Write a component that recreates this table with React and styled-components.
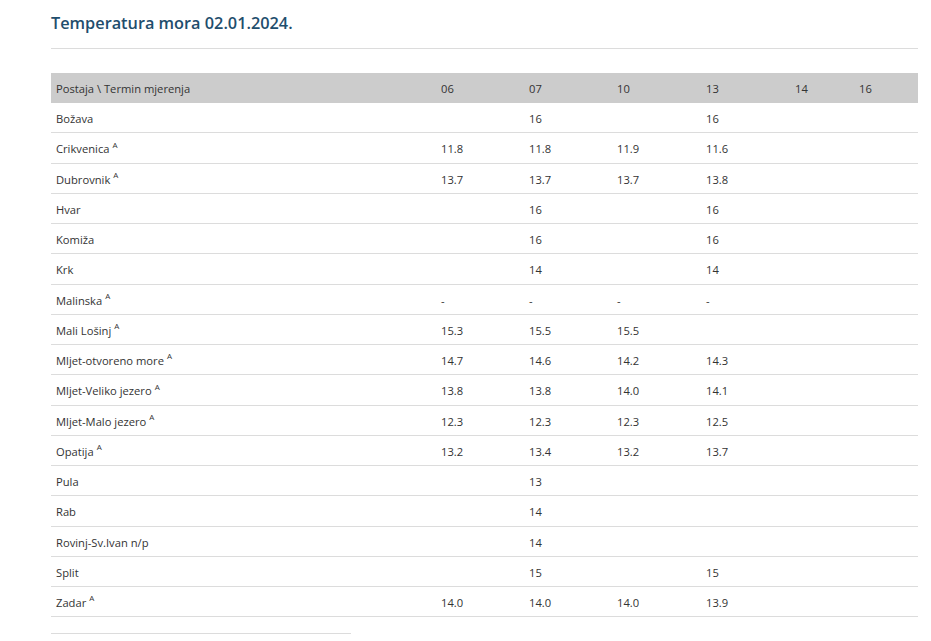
import React from "react";
import styled, { createGlobalStyle } from "styled-components";

const Global = createGlobalStyle`
  html, body { margin: 0; padding: 0; background: #fff; }
  body { font-family: "Open Sans", "Noto Sans", sans-serif; color: #333; }
`;

const Page = styled.div`
  padding: 0 13px 0 51px;
  width: 867px;
`;

const Title = styled.h1`
  margin: 0;
  padding-top: 11px;
  font-size: 16.3px;
  line-height: 24px;
  font-weight: 600;
  color: #1f4e6d;
`;

const Rule = styled.hr`
  margin: 13px 0 24px;
  border: 0;
  border-top: 1px solid #dcdcdc;
  width: ${(p) => p.$w || "100%"};
`;

const Table = styled.table`
  width: 867px;
  border-collapse: collapse;
  table-layout: fixed;
  font-size: 11.2px;
`;

const HeadCell = styled.th`
  background: #cccccc;
  text-align: left;
  font-weight: 400;
  padding: 8px 5px 6px;
  line-height: 16px;
  height: 16px;
  color: #333;
`;

const Cell = styled.td`
  padding: 8px 5px 6px;
  line-height: 15.25px;
  border-bottom: 1px solid #dcdcdc;
  color: #333;
  white-space: nowrap;
`;

const Sup = styled.sup`
  font-size: 8px;
  line-height: 0;
  margin-left: 3px;
  position: relative;
  top: -1px;
`;

const cols = ["06", "07", "10", "13", "14", "16"];
const widths = [385, 88, 88, 89, 89, 64, 64];

const rows = [
  ["Božava", false, ["", "16", "", "16", "", ""]],
  ["Crikvenica", true, ["11.8", "11.8", "11.9", "11.6", "", ""]],
  ["Dubrovnik", true, ["13.7", "13.7", "13.7", "13.8", "", ""]],
  ["Hvar", false, ["", "16", "", "16", "", ""]],
  ["Komiža", false, ["", "16", "", "16", "", ""]],
  ["Krk", false, ["", "14", "", "14", "", ""]],
  ["Malinska", true, ["-", "-", "-", "-", "", ""]],
  ["Mali Lošinj", true, ["15.3", "15.5", "15.5", "", "", ""]],
  ["Mljet-otvoreno more", true, ["14.7", "14.6", "14.2", "14.3", "", ""]],
  ["Mljet-Veliko jezero", true, ["13.8", "13.8", "14.0", "14.1", "", ""]],
  ["Mljet-Malo jezero", true, ["12.3", "12.3", "12.3", "12.5", "", ""]],
  ["Opatija", true, ["13.2", "13.4", "13.2", "13.7", "", ""]],
  ["Pula", false, ["", "13", "", "", "", ""]],
  ["Rab", false, ["", "14", "", "", "", ""]],
  ["Rovinj-Sv.Ivan n/p", false, ["", "14", "", "", "", ""]],
  ["Split", false, ["", "15", "", "15", "", ""]],
  ["Zadar", true, ["14.0", "14.0", "14.0", "13.9", "", ""]],
];

export default function App() {
  return (
    <Page>
      <Global />
      <Title>Temperatura mora 02.01.2024.</Title>
      <Rule />
      <Table>
        <colgroup>
          {widths.map((w, i) => (
            <col key={i} style={{ width: w }} />
          ))}
        </colgroup>
        <thead>
          <tr>
            <HeadCell>Postaja \ Termin mjerenja</HeadCell>
            {cols.map((c) => (
              <HeadCell key={c}>{c}</HeadCell>
            ))}
          </tr>
        </thead>
        <tbody>
          {rows.map(([name, a, vals]) => (
            <tr key={name}>
              <Cell>
                {name}
                {a && <Sup>A</Sup>}
              </Cell>
              {vals.map((v, i) => (
                <Cell key={i}>{v}</Cell>
              ))}
            </tr>
          ))}
        </tbody>
      </Table>
      <Rule $w="300px" style={{ margin: "16px 0 0" }} />
    </Page>
  );
}
